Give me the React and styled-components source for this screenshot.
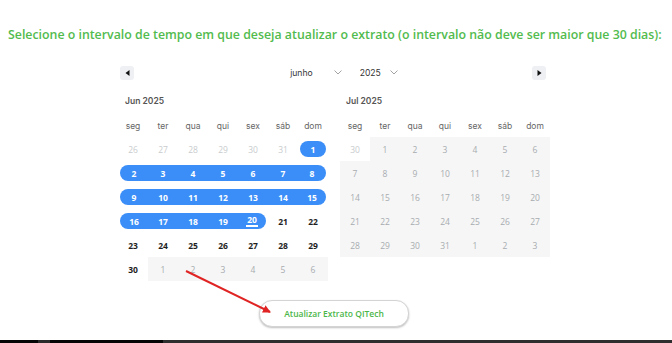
import React from "react";
import styled, { createGlobalStyle } from "styled-components";

const GlobalStyle = createGlobalStyle`
  html, body { margin: 0; padding: 0; background: #fff; }
  body { font-family: "Open Sans", "Liberation Sans", sans-serif; }
`;

const Page = styled.div`
  position: relative;
  height: 343px;
  display: flex;
  flex-direction: column;
  overflow: hidden;
  background: #fff;
`;

const Title = styled.div`
  margin-top: 25px;
  padding-left: 8px;
  height: 20px;
  line-height: 20px;
  font-family: "Open Sans", sans-serif;
  font-weight: 600;
  font-size: 12.35px;
  color: #52bb4e;
  white-space: nowrap;
`;

const Calendar = styled.div`
  margin: 20px 0 0 118px;
  width: 432px;
  display: flex;
  flex-direction: column;
`;

const Nav = styled.div`
  height: 15px;
  display: flex;
  align-items: center;
  justify-content: space-between;
  padding: 0 4px 0 2px;
`;

const NavButton = styled.div`
  width: 14px;
  height: 14px;
  border-radius: 3px;
  background: #eef0f4;
  display: flex;
  align-items: center;
  justify-content: center;
`;

const Selects = styled.div`
  display: flex;
  align-items: center;
  gap: 18px;
  margin-left: 22px;
`;

const Select = styled.div`
  display: flex;
  align-items: center;
  gap: ${(p) => p.$gap}px;
  font-family: Inter, sans-serif;
  font-size: 8.6px;
  color: #333;
`;

const Months = styled.div`
  display: flex;
  gap: 12px;
  margin-top: 14px;
`;

const Month = styled.div`
  width: 210px;
  display: flex;
  flex-direction: column;
`;

const Caption = styled.div`
  height: 14px;
  line-height: 14px;
  padding-left: ${(p) => p.$pl}px;
  font-family: Inter, sans-serif;
  font-weight: 600;
  font-size: 8.5px;
  color: #555;
`;

const Grid = styled.div`
  display: grid;
  grid-template-columns: repeat(7, 30px);
`;

const Weekday = styled.div`
  height: 24px;
  margin-top: 6px;
  margin-bottom: -1px;
  display: flex;
  align-items: center;
  justify-content: center;
  font-family: Inter, sans-serif;
  font-size: 8.5px;
  color: #666;
`;

const Cell = styled.div`
  height: 24px;
  display: flex;
  align-items: center;
  background: ${(p) => (p.$disabled ? "#f6f6f6" : "#fff")};
`;

const Pill = styled.div`
  flex: 1;
  height: 16px;
  display: flex;
  align-items: center;
  justify-content: center;
  font-family: "Open Sans", sans-serif;
  font-size: 8.5px;
  background: ${(p) => (p.$sel ? "#3b8ef7" : "transparent")};
  color: ${(p) =>
    p.$sel ? "#fff" : p.$disabled ? "#a8acb0" : p.$outside ? "#c9ccce" : "#1e1e1e"};
  font-weight: ${(p) => (p.$disabled || p.$outside ? 500 : 700)};
  margin-left: ${(p) => (p.$start ? 2 : 0)}px;
  margin-right: ${(p) => (p.$end ? 2 : 0)}px;
  border-top-left-radius: ${(p) => (p.$start ? 8 : 0)}px;
  border-bottom-left-radius: ${(p) => (p.$start ? 8 : 0)}px;
  border-top-right-radius: ${(p) => (p.$end ? 8 : 0)}px;
  border-bottom-right-radius: ${(p) => (p.$end ? 8 : 0)}px;
`;

const Today = styled.span`
  border-bottom: 2px solid #fff;
  line-height: 10px;
  padding: 0 1px;
`;

const ButtonRow = styled.div`
  display: flex;
  justify-content: center;
  margin-top: 19px;
  padding-right: 4px;
`;

const Button = styled.div`
  width: 148px;
  height: 25px;
  border-radius: 13px;
  background: #fff;
  border: 1px solid #d4d4d4;
  box-shadow: 0 1px 2px rgba(0, 0, 0, 0.25);
  display: flex;
  align-items: center;
  justify-content: center;
  font-family: "Open Sans", sans-serif;
  font-weight: 600;
  font-size: 8.5px;
  color: #4bb648;
`;

const Spacer = styled.div`
  flex: 1;
`;

const Bar = styled.div`
  height: 3px;
  display: flex;
`;

const BarSeg = styled.div`
  width: ${(p) => (p.$w ? p.$w + "px" : "auto")};
  flex: ${(p) => (p.$w ? "none" : 1)};
  background: ${(p) => p.$c};
`;

const ArrowOverlay = styled.svg`
  position: absolute;
  left: 0;
  top: 0;
  pointer-events: none;
`;

const weekdays = ["seg", "ter", "qua", "qui", "sex", "sáb", "dom"];

const june = [
  [26, 27, 28, 29, 30, 31, 1].map((d, i) => ({ d, outside: i < 6 })),
];
for (let start = 2; start <= 23; start += 7) {
  june.push(Array.from({ length: 7 }, (_, i) => ({ d: start + i })));
}
june.push([{ d: 30 }, ...[1, 2, 3, 4, 5, 6].map((d) => ({ d, outside: true, disabled: true }))]);

const july = [
  [{ d: 30, outside: true }, ...[1, 2, 3, 4, 5, 6].map((d) => ({ d, disabled: true }))],
];
for (let start = 7; start <= 21; start += 7) {
  july.push(Array.from({ length: 7 }, (_, i) => ({ d: start + i, disabled: true })));
}
july.push([28, 29, 30, 31, 1, 2, 3].map((d) => ({ d, disabled: true })));

function juneSel(c) {
  if (c.outside) return null;
  if (c.d >= 1 && c.d <= 20) return true;
  return null;
}

function MonthView({ title, rows, sel, pl }) {
  return (
    <Month>
      <Caption $pl={pl}>{title}</Caption>
      <Grid>
        {weekdays.map((w) => (
          <Weekday key={w}>{w}</Weekday>
        ))}
        {rows.map((row, ri) =>
          row.map((c, ci) => {
            const s = sel ? sel(c) : null;
            const prev = ci > 0 && sel ? sel(row[ci - 1]) : null;
            const next = ci < 6 && sel ? sel(row[ci + 1]) : null;
            return (
              <Cell key={ri + "-" + ci} $disabled={c.disabled}>
                <Pill
                  $sel={!!s}
                  $start={s && !prev}
                  $end={s && !next}
                  $disabled={c.disabled}
                  $outside={c.outside}
                >
                  {c.d === 20 && s ? <Today>{c.d}</Today> : c.d}
                </Pill>
              </Cell>
            );
          })
        )}
      </Grid>
    </Month>
  );
}

const Chevron = () => (
  <svg width="8" height="5" viewBox="0 0 8 5">
    <path d="M0.5 0.5 L4 4 L7.5 0.5" fill="none" stroke="#999" strokeWidth="0.9" />
  </svg>
);

export default function App() {
  return (
    <>
      <GlobalStyle />
      <Page>
        <Title>
          Selecione o intervalo de tempo em que deseja atualizar o extrato (o intervalo não deve ser maior que 30 dias):
        </Title>
        <Calendar>
          <Nav>
            <NavButton>
              <svg width="5" height="6" viewBox="0 0 5 6">
                <path d="M4.5 0 L0.5 3 L4.5 6 Z" fill="#111" />
              </svg>
            </NavButton>
            <Selects>
              <Select $gap={21}>
                junho <Chevron />
              </Select>
              <Select $gap={9}>
                2025 <Chevron />
              </Select>
            </Selects>
            <NavButton>
              <svg width="5" height="6" viewBox="0 0 5 6">
                <path d="M0.5 0 L4.5 3 L0.5 6 Z" fill="#111" />
              </svg>
            </NavButton>
          </Nav>
          <Months>
            <MonthView title="Jun 2025" rows={june} sel={juneSel} pl={7} />
            <MonthView title="Jul 2025" rows={july} pl={6} />
          </Months>
        </Calendar>
        <ButtonRow>
          <Button>Atualizar Extrato QITech</Button>
        </ButtonRow>
        <Spacer />
        <Bar>
          <BarSeg $w={38} $c="#050505" />
          <BarSeg $w={12} $c="#2a2a2a" />
          <BarSeg $w={113} $c="#050505" />
          <BarSeg $c="#2e2e2e" />
        </Bar>
        <ArrowOverlay width="672" height="343">
          <defs>
            <marker id="ah" markerWidth="8" markerHeight="8" refX="7" refY="4" orient="auto" markerUnits="userSpaceOnUse">
              <path d="M0 0 L8 4 L0 8 Z" fill="#e02424" />
            </marker>
          </defs>
          <line x1="186" y1="271" x2="270" y2="312" stroke="#e02424" strokeWidth="2" markerEnd="url(#ah)" />
        </ArrowOverlay>
      </Page>
    </>
  );
}
